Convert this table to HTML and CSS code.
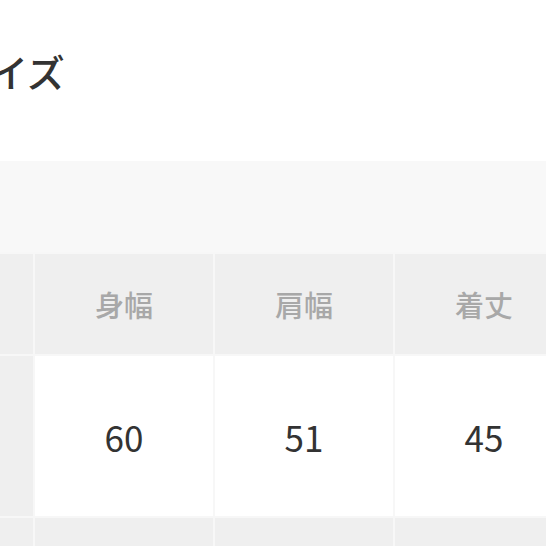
FILE: index.html
```html
<!DOCTYPE html>
<html lang="ja">
<head>
<meta charset="utf-8">
<link rel="stylesheet" href="styles.css">
</head>
<body>
<div class="page">
  <h2 class="title">サイズ</h2>
  <div class="band"></div>
  <div class="grid">
    <div class="cell side"></div>
    <div class="cell head">身幅</div>
    <div class="cell head">肩幅</div>
    <div class="cell head">着丈</div>
    <div class="cell side tall"></div>
    <div class="cell val tall">60</div>
    <div class="cell val tall">51</div>
    <div class="cell val tall">45</div>
    <div class="cell side low"></div>
    <div class="cell head low"></div>
    <div class="cell head low"></div>
    <div class="cell head low"></div>
  </div>
</div>
</body>
</html>
```
FILE: styles.css
```css
html, body {
  margin: 0;
  padding: 0;
  background: #ffffff;
  overflow: hidden;
}
.page {
  width: 546px;
  height: 546px;
  overflow: hidden;
  font-family: "Noto Sans CJK JP", "Noto Sans", sans-serif;
}
.title {
  margin: 52px 0 0 -48px;
  font-size: 38px;
  line-height: 38px;
  font-weight: 500;
  color: #333333;
  white-space: nowrap;
}
.band {
  margin-top: 71px;
  height: 91px;
  background: #f8f8f8;
}
.grid {
  display: grid;
  grid-template-columns: 33px 178px 178px 178px;
  grid-template-rows: 100px 160px 40px;
  gap: 2px;
  padding-top: 2px;
  background: #f7f7f7;
  width: 580px;
}
.cell {
  display: flex;
  align-items: center;
  justify-content: center;
}
.side {
  background: #efefef;
}
.head {
  background: #efefef;
  color: #a8a8a8;
  font-size: 29px;
  font-weight: 500;
}
.val {
  background: #ffffff;
  color: #333333;
  font-size: 35px;
  font-weight: 400;
}
```
